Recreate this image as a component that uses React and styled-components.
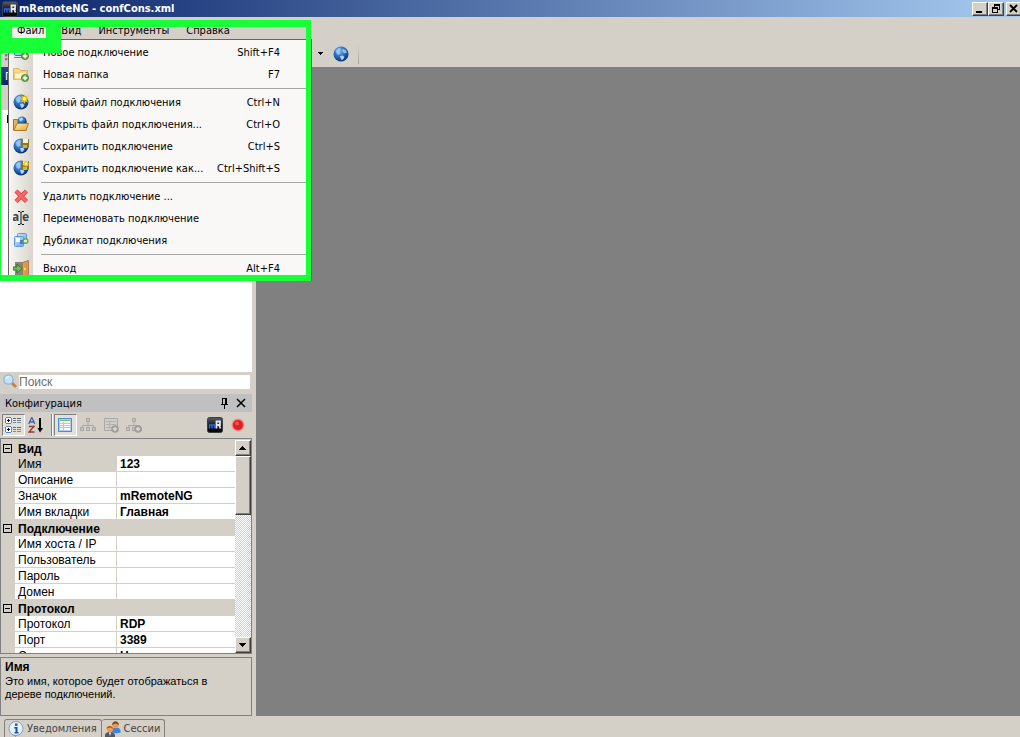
import React, { useState } from 'react'
import styled, { createGlobalStyle, css } from 'styled-components'

const properties = [
  { category: 'Вид' },
  { name: 'Имя', value: '123' },
  { name: 'Описание', value: '' },
  { name: 'Значок', value: 'mRemoteNG' },
  { name: 'Имя вкладки', value: 'Главная' },
  { category: 'Подключение' },
  { name: 'Имя хоста / IP', value: '' },
  { name: 'Пользователь', value: '' },
  { name: 'Пароль', value: '' },
  { name: 'Домен', value: '' },
  { category: 'Протокол' },
  { name: 'Протокол', value: 'RDP' },
  { name: 'Порт', value: '3389' },
  { name: 'Сессия консоли', value: 'Нет' },
]

const fileMenu = [
  { icon: NewConnectionIcon, label: 'Новое подключение', keys: 'Shift+F4' },
  { icon: NewFolderIcon, label: 'Новая папка', keys: 'F7' },
  null,
  { icon: NewFileIcon, label: 'Новый файл подключения', keys: 'Ctrl+N' },
  { icon: OpenFileIcon, label: 'Открыть файл подключения...', keys: 'Ctrl+O' },
  { icon: SaveIcon, label: 'Сохранить подключение', keys: 'Ctrl+S' },
  { icon: SaveAsIcon, label: 'Сохранить подключение как...', keys: 'Ctrl+Shift+S' },
  null,
  { icon: DeleteIcon, label: 'Удалить подключение ...' },
  { icon: RenameIcon, label: 'Переименовать подключение' },
  { icon: DuplicateIcon, label: 'Дубликат подключения' },
  null,
  { icon: ExitIcon, label: 'Выход', keys: 'Alt+F4' },
]

/* icons */

function Icon({ children, size = 16, crisp }) {
  return (
    <svg
      width={size}
      height={size}
      viewBox={`0 0 ${size} ${size}`}
      shapeRendering={crisp ? 'crispEdges' : 'auto'}
      aria-hidden="true"
    >
      {children}
    </svg>
  )
}

function Gradients() {
  return (
    <svg width="0" height="0" aria-hidden="true">
      <defs>
        <radialGradient id="ball" cx="0.4" cy="0.3" r="0.75">
          <stop offset="0" stopColor="#7db8f0" />
          <stop offset="0.45" stopColor="#2f74c6" />
          <stop offset="1" stopColor="#082765" />
        </radialGradient>
        <radialGradient id="record">
          <stop offset="0.4" stopColor="#e3202a" />
          <stop offset="0.7" stopColor="#e8584f" />
          <stop offset="1" stopColor="#ff9a90" stopOpacity="0.2" />
        </radialGradient>
        <linearGradient id="black" x1="0" y1="0" x2="0" y2="1">
          <stop offset="0" stopColor="#5b5f66" />
          <stop offset="0.5" stopColor="#16181c" />
          <stop offset="1" stopColor="#000" />
        </linearGradient>
        <linearGradient id="folder" x1="0" y1="0" x2="1" y2="1">
          <stop offset="0" stopColor="#fff0b0" />
          <stop offset="1" stopColor="#e3a53c" />
        </linearGradient>
        <linearGradient id="screen" x1="0" y1="0" x2="1" y2="1">
          <stop offset="0" stopColor="#cfe6fb" />
          <stop offset="1" stopColor="#6aa5e6" />
        </linearGradient>
      </defs>
    </svg>
  )
}

function Ball() {
  return (
    <g>
      <circle cx="8" cy="8" r="7.5" fill="url(#ball)" />
      <path d="M2.5 4.5L6 1.8 8 3 6.5 5.5 7.5 7.5 5 9 3.5 7.2z" fill="#a9d4f5" opacity="0.7" />
      <path d="M9.5 3l3 .7 1.6 3-2.6.6-2-1.6z" fill="#b5daf7" opacity="0.7" />
      <path d="M7 10l3-.6 1.4 2L9.5 14 8 13.4z" fill="#c9e6fb" opacity="0.85" />
    </g>
  )
}

function Plus() {
  return (
    <g>
      <circle cx="12" cy="12" r="3.6" fill="#6aa84f" stroke="#47812f" strokeWidth="0.8" />
      <path d="M12 9.8v4.4M9.8 12h4.4" stroke="#fff" strokeWidth="1.4" />
    </g>
  )
}

function Star() {
  return (
    <g>
      <path d="M11.5 0l1.1 2.4L15 1.3l-1 2.4L16 5l-2 1 1 2.5-2.5-1-1 2.5-1-2.5-2.5 1 1-2.5-2-1 2-1.3-1-2.4 2.5 1.1z" fill="#e8bd1c" />
      <circle cx="11.5" cy="4.8" r="1.8" fill="#fff29a" />
    </g>
  )
}

function Floppy() {
  return (
    <g>
      <path d="M8 1h8v8l-1 1H8z" fill="#8b7426" />
      <path d="M10 1h5v4h-5z" fill="#f6f2e2" />
      <path d="M10 7h4v3h-4z" fill="#c9b45c" />
    </g>
  )
}

function GlobeIcon() {
  return <Icon><Ball /></Icon>
}

function NewConnectionIcon() {
  return (
    <Icon>
      <rect x="1.5" y="2.5" width="12" height="9" rx="1" fill="url(#screen)" stroke="#3c76c2" />
      <path d="M1 13.5h10" stroke="#4c86cc" />
      <path d="M3 5h7" stroke="#fff" />
      <Plus />
    </Icon>
  )
}

function NewFolderIcon() {
  return (
    <Icon>
      <path d="M.5 13.5v-11h5.500l1.500 2h7v9z" fill="#f4d98a" stroke="#d9b25c" />
      <path d="M1.500 13V7h5l1-1h6v7z" fill="#fdf3c4" stroke="#e6c878" />
      <Plus />
    </Icon>
  )
}

function NewFileIcon() {
  return <Icon><Ball /><Star /></Icon>
}

function OpenFileIcon() {
  return (
    <Icon>
      <path d="M.5 14V3.5h4l1 1.500h8v9z" fill="#e6b24d" stroke="#a8741c" />
      <circle cx="9" cy="5" r="4.5" fill="url(#ball)" />
      <path d="M6 3l3-1.500 1 2-3 2z" fill="#b5daf7" />
      <path d="M.8 14.500L4 7.500h11.500L13 14.500z" fill="url(#folder)" stroke="#b27a1e" />
    </Icon>
  )
}

function SaveIcon() {
  return <Icon><Ball /><Floppy /></Icon>
}

function SaveAsIcon() {
  return (
    <Icon>
      <Ball />
      <Floppy />
      <g transform="translate(4 0) scale(0.78)"><Star /></g>
    </Icon>
  )
}

function DeleteIcon() {
  return (
    <Icon>
      <path d="M3 3l10.500 10.500M13.500 3L3 13.500" stroke="#d8404a" strokeWidth="4.4" />
      <path d="M3 3l10.500 10.500M13.500 3L3 13.500" stroke="#ff6464" strokeWidth="2.8" />
    </Icon>
  )
}

function RenameIcon() {
  return (
    <Icon>
      <text x="-1" y="11" fontFamily="'Noto Sans', sans-serif" fontSize="12" fontWeight="700" fill="#444">a</text>
      <text x="9" y="11" fontFamily="'Noto Sans', sans-serif" fontSize="12" fontWeight="700" fill="#444">e</text>
      <path d="M5 1.500h2l1 1 1-1h2M5 14.500h2l1-1 1 1h2M8 2v12" stroke="#111" fill="none" />
    </Icon>
  )
}

function DuplicateIcon() {
  return (
    <Icon>
      <rect x="4.5" y="1.5" width="9" height="10" rx="1" fill="url(#screen)" stroke="#5d96dc" />
      <rect x="1.5" y="4.500" width="9" height="10" rx="1" fill="url(#screen)" stroke="#5d96dc" />
      <path d="M3 6h4v4H3z" fill="#f2f9ff" />
      <path d="M7 8h4v4H7z" fill="#3f7fd0" />
      <circle cx="12.500" cy="9" r="2.300" fill="#e6f2dc" stroke="#6aa84f" strokeWidth="1.4" />
    </Icon>
  )
}

function ExitIcon() {
  return (
    <Icon>
      <path d="M2 2h8v14H2z" fill="#85857f" />
      <path d="M9.500 2.500L15.500.5v15.500h-6z" fill="#d9a066" stroke="#b07840" />
      <path d="M13 3v12" stroke="#c08850" />
      <circle cx="12" cy="9" r="1.2" fill="#f8d84a" />
      <path d="M0 7h4V4l5 4.500L4 13v-3H0z" fill="#6fbf58" stroke="#2e7a24" />
    </Icon>
  )
}

function AppIcon() {
  return (
    <Icon>
      <rect x="0.5" y="0.5" width="15" height="15" rx="2" fill="url(#black)" stroke="#3a3d42" />
      <path d="M2.500 11.500V8h5v3.500M5 8v3.500" stroke="#2f62e8" strokeWidth="1.5" fill="none" />
      <path d="M9.500 11.500V4.500H13v3.500H9.500M12 8l1.500 3.500" stroke="#e4e8ee" strokeWidth="1.8" fill="none" />
    </Icon>
  )
}

function SearchIcon() {
  return (
    <Icon>
      <path d="M9 9l4 4" stroke="#c0883c" strokeWidth="3" />
      <circle cx="5.500" cy="5.500" r="4.600" fill="#c8e2fa" stroke="#8fb6dd" strokeWidth="1.4" />
      <path d="M3 4.500a3 3 0 0 1 3-2" stroke="#fff" fill="none" />
    </Icon>
  )
}

function CategorizedIcon() {
  return (
    <Icon crisp>
      {[0, 9].map((y) => (
        <g key={y}>
          <path d={`M1 ${y}h5v1h1v5h-1v1h-5v-1h-1v-5h1z`} fill="#4f87c7" />
          <path d={`M1 ${y + 1}h5v5h-5z`} fill="#fff" />
          <path d={`M2 ${y + 3}h3v1h-3zM3 ${y + 2}h1v3h-1z`} fill="#000" />
          <path d={`M8 ${y + 1}h3v1h-3zM12 ${y + 1}h4v1h-4z`} fill="#6b6b66" />
          <path d={`M8 ${y + 3}h3v1h-3zM12 ${y + 3}h4v1h-4z`} fill="#5a8ac2" />
          <path d={`M8 ${y + 5}h3v1h-3zM12 ${y + 5}h4v1h-4z`} fill="#8a8f86" />
        </g>
      ))}
    </Icon>
  )
}

function SortIcon() {
  return (
    <Icon>
      <path d="M.8 7L3.500.8h.6L6.800 7M2 5h4" stroke="#3a63b0" strokeWidth="1.3" fill="none" />
      <path d="M1 9.500h5L1 15h5.500" stroke="#9c3636" strokeWidth="1.3" fill="none" />
      <path d="M12 1v12" stroke="#000" strokeWidth="2" />
      <path d="M9.500 11H15l-3 4.500z" fill="#000" />
    </Icon>
  )
}

function PropertiesIcon() {
  return (
    <Icon crisp>
      <path d="M1 1h14v14H1z" fill="#4f8fd8" />
      <path d="M2 2h12v12H2z" fill="#a9ccf2" />
      <path d="M3 3h10v1H3z" fill="#7fc06c" />
      <path d="M3 4h10v9H3z" fill="#fff" />
      <path d="M3 6h10v1H3zM3 8h10v1H3zM3 10h10v1H3zM6 5h1v8H6z" fill="#a9c8ea" />
    </Icon>
  )
}

function InheritanceIcon({ plus }) {
  return (
    <Icon>
      <path d="M8 5v4M2.500 11V8.500h11V11" stroke="#aaa8a2" fill="none" />
      <path d="M6 1h4v4H6zM0 10h4v4H0zM6 10h4v4H6zM12 10h4v4h-4z" fill="#aaa8a2" />
      <path d="M7 2h2v2H7zM1 11h2v2H1zM7 11h2v2H7zM13 11h2v2h-2z" fill="#c4c2bc" />
      {plus && <DisabledPlus />}
    </Icon>
  )
}

function DisabledPlus() {
  return (
    <g>
      <circle cx="12" cy="12" r="3.8" fill="#a09e98" />
      <path d="M12 10v4M10 12h4" stroke="#dedbd4" strokeWidth="1.4" />
    </g>
  )
}

function DefaultPropertiesIcon() {
  return (
    <Icon>
      <path d="M1.500 1.500h13v12h-13z" fill="#d0cdc6" stroke="#aaa8a2" />
      <path d="M3 4.500h10M3 7.500h10M3 10.500h10M6.500 4v8" stroke="#b4b2ac" />
      <DisabledPlus />
    </Icon>
  )
}

function RecordIcon() {
  return (
    <Icon>
      <circle cx="8" cy="8" r="7" fill="url(#record)" />
      <circle cx="8" cy="8" r="4.800" fill="#dd1f26" />
      <circle cx="7" cy="6.500" r="2" fill="#ef5355" />
    </Icon>
  )
}

function InfoIcon() {
  return (
    <Icon>
      <path d="M4 13l4 3v-3z" fill="#5f7fae" />
      <circle cx="8" cy="7.500" r="7" fill="#e6f0fc" stroke="#7f9cc4" />
      <path d="M7 2.500h2.500v2.200H7zM6.300 6H9.500v5h1v1.500h-4V11h1V7.500H6.300z" fill="#1c4fa8" />
    </Icon>
  )
}

function SessionsIcon() {
  return (
    <Icon>
      <path d="M7 9.500c0-4 8-4 8.500 0v2c-2 1-6 1-8.500 0z" fill="#3c86e0" />
      <circle cx="10.500" cy="4" r="3.300" fill="#e89a5c" />
      <path d="M7 4C7.500-1 13.500-1 14 4l-3.500-1.500z" fill="#8a4d1c" />
      <path d="M0 14c0-4 9.500-4 10 0v2H0z" fill="#55585e" />
      <path d="M4 11.500h2L5 15z" fill="#fff" />
      <circle cx="4.800" cy="8" r="3.200" fill="#f29a52" />
      <path d="M1.500 7.500C2 4 7.500 4 8 7.500L5 6.500z" fill="#b3561a" />
    </Icon>
  )
}

/* application */

export default function App() {
  const [query, setQuery] = useState('')

  return (
    <Window>
      <GlobalStyle />
      <Gradients />
      <TitleBar>
        <AppIcon />
        <h1>mRemoteNG - confCons.xml</h1>
        <CaptionButton aria-label="Свернуть">
          <Icon size={12} crisp><path d="M2 8h6v2H2z" /></Icon>
        </CaptionButton>
        <CaptionButton aria-label="Восстановить">
          <Icon size={12} crisp>
            <path d="M4 1h6v6H8V6h1V3H5v1H4zM2 4h6v6H2zM3 6v3h4V6z" fillRule="evenodd" />
          </Icon>
        </CaptionButton>
        <CaptionButton $last aria-label="Закрыть">
          <Icon size={12}><path d="M2 2l7 7M9 2L2 9" stroke="#000" strokeWidth="1.8" /></Icon>
        </CaptionButton>
      </TitleBar>

      <MenuBar>
        <MenuTitle $open>Файл</MenuTitle>
        <MenuTitle>Вид</MenuTitle>
        <MenuTitle>Инструменты</MenuTitle>
        <MenuTitle>Справка</MenuTitle>
        <FileMenu />
      </MenuBar>

      <ToolStrip>
        <Grip />
        <ToolButton aria-label="Список">
          <Icon size={6} crisp><path d="M0 1h5v1H4v1H3v1H2V3H1V2H0z" /></Icon>
        </ToolButton>
        <ToolButton aria-label="Быстрое подключение"><GlobeIcon /></ToolButton>
      </ToolStrip>

      <Workspace>
        <SidePanel>
          <PanelCaption $active>П</PanelCaption>
          <TreeTools />
          <Tree />
          <SearchRow>
            <label htmlFor="search" aria-label="Поиск"><SearchIcon /></label>
            <input
              id="search"
              placeholder="Поиск"
              value={query}
              onChange={(e) => setQuery(e.target.value)}
            />
          </SearchRow>
          <PanelCaption>
            <span>Конфигурация</span>
            <PanelButton aria-label="Закрепить">
              <Icon size={11} crisp>
                <path d="M3 0h5v6h1v1H6v4H5V7H2V6h1zM4 1v5h2V1z" fillRule="evenodd" />
              </Icon>
            </PanelButton>
            <PanelButton aria-label="Закрыть панель">
              <Icon size={11}><path d="M1 1l8 8M9 1L1 9" stroke="#000" strokeWidth="1.5" /></Icon>
            </PanelButton>
          </PanelCaption>
          <PropertyTools />
          <PropertyGrid />
          <Description>
            <b>Имя</b>
            <p>Это имя, которое будет отображаться в дереве подключений.</p>
          </Description>
        </SidePanel>
        <Documents />
      </Workspace>

      <BottomTabs>
        <BottomTab><InfoIcon />Уведомления</BottomTab>
        <BottomTab><SessionsIcon />Сессии</BottomTab>
      </BottomTabs>

      <MenuOutline />
      <TitleOutline />
    </Window>
  )
}

function FileMenu() {
  return (
    <Dropdown>
      {fileMenu.map((item, index) => {
        if (!item) return <Separator key={index} />
        return (
          <MenuItem key={index}>
            <item.icon />
            <span>{item.label}</span>
            <kbd>{item.keys}</kbd>
          </MenuItem>
        )
      })}
    </Dropdown>
  )
}

function PropertyTools() {
  return (
    <PropertyBar>
      <PropertyButton $pressed aria-label="По категориям"><CategorizedIcon /></PropertyButton>
      <PropertyButton aria-label="По алфавиту"><SortIcon /></PropertyButton>
      <Divider />
      <PropertyButton $pressed aria-label="Свойства"><PropertiesIcon /></PropertyButton>
      <PropertyButton aria-label="Наследование"><InheritanceIcon /></PropertyButton>
      <PropertyButton aria-label="Свойства по умолчанию"><DefaultPropertiesIcon /></PropertyButton>
      <PropertyButton aria-label="Наследование по умолчанию"><InheritanceIcon plus /></PropertyButton>
      <Spacer />
      <PropertyButton aria-label="Значок"><AppIcon /></PropertyButton>
      <PropertyButton aria-label="Состояние"><RecordIcon /></PropertyButton>
    </PropertyBar>
  )
}

function PropertyGrid() {
  return (
    <GridBox>
      <GridView>
        <Table>
          <colgroup>
            <col style={{ width: 14 }} />
            <col style={{ width: 102 }} />
            <col />
          </colgroup>
          <tbody>
            {properties.map((item, index) =>
              item.category ? (
                <CategoryRow key={index}>
                  <td>
                    <button aria-label={item.category}>
                      <Icon size={9} crisp>
                        <path d="M0 0h9v9H0zM1 1v7h7V1zM2 4h5v1H2z" fillRule="evenodd" />
                      </Icon>
                    </button>
                  </td>
                  <th colSpan={2}>{item.category}</th>
                </CategoryRow>
              ) : (
                <PropertyRow key={index} $selected={index === 1}>
                  <td />
                  <th>{item.name}</th>
                  <td>{item.value}</td>
                </PropertyRow>
              )
            )}
          </tbody>
        </Table>
      </GridView>
      <ScrollBar>
        <ScrollButton aria-label="Вверх">
          <Icon size={8} crisp><path d="M3 2h1v1h1v1h1v1h1v1H0V5h1V4h1V3h1z" /></Icon>
        </ScrollButton>
        <Thumb />
        <Spacer />
        <ScrollButton aria-label="Вниз">
          <Icon size={8} crisp><path d="M0 2h7v1H6v1H5v1H4v1H3V5H2V4H1V3H0z" /></Icon>
        </ScrollButton>
      </ScrollBar>
    </GridBox>
  )
}

const GlobalStyle = createGlobalStyle`
  * {
    box-sizing: border-box;
  }

  body {
    margin: 0;
    background: #d4d0c8;
    overflow: hidden;
  }

  body, button, input {
    font-family: "DejaVu Sans Condensed", "DejaVu Sans", sans-serif;
    font-size: 11px;
    color: #000;
  }

  button {
    margin: 0;
    padding: 0;
    border: 0;
    background: none;
  }

  svg {
    flex: none;
    display: block;
  }
`

const raised = css`
  background: #d4d0c8;
  border: 1px solid;
  border-color: #fff #404040 #404040 #fff;
  box-shadow: inset -1px -1px #808080;
`

const Window = styled.div`
  position: relative;
  display: flex;
  flex-direction: column;
  height: 100vh;
  background: #d4d0c8;
`

const TitleBar = styled.header`
  display: flex;
  align-items: center;
  height: 17px;
  flex: none;
  padding-left: 2px;
  background: linear-gradient(90deg, #0a246a, #a6caf0);

  h1 {
    flex: 1;
    margin: 0 0 0 1px;
    color: #fff;
    font-size: 11px;
    line-height: 16px;
  }
`

const CaptionButton = styled.button`
  ${raised}
  width: 16px;
  height: 14px;
  margin-left: ${({ $last }) => ($last ? '2px' : '0')};
  margin-right: ${({ $last }) => ($last ? '-2px' : '0')};
  padding-left: 1px;
`

const MenuBar = styled.nav`
  position: relative;
  display: flex;
  flex: none;
  height: 23px;
  padding: 3px 0 0 12px;
`

const MenuTitle = styled.button`
  height: 20px;
  padding: 0 5px;
  margin-right: 7px;
  background: ${({ $open }) => ($open ? '#f1efec' : 'transparent')};
`

const Dropdown = styled.div`
  position: absolute;
  z-index: 1;
  top: 22px;
  left: 8px;
  width: 304px;
  padding: 1px 0;
  border: 1px solid #666;
  background: linear-gradient(90deg, #f7f6f3, #d9d5cd 24px, #f9f8f7 24px);
`

const MenuItem = styled.button`
  display: flex;
  align-items: center;
  width: 100%;
  height: 22px;
  padding: 0 31px 0 4px;
  text-align: left;

  span {
    flex: 1;
    margin-left: 14px;
    white-space: nowrap;
  }

  kbd {
    font-family: inherit;
  }
`

const Separator = styled.hr`
  height: 1px;
  margin: 3px 0 2px 32px;
  border: 0;
  background: #a6a6a6;
`

const ToolStrip = styled.div`
  display: flex;
  align-items: center;
  flex: none;
  width: 359px;
  height: 27px;
  padding-left: 5px;
  gap: 9px;
  background: linear-gradient(transparent, #a6a29a) right / 1px 20px no-repeat;
`

const Grip = styled.i`
  flex: none;
  width: 304px;
  height: 16px;
  background: radial-gradient(circle at 1px 1px, #808080 1px, transparent 2px) 0 0 / 3px 4px repeat-y;
`

const ToolButton = styled.button`
  display: flex;
`

const Workspace = styled.main`
  display: flex;
  flex: 1;
  min-height: 0;
`

const SidePanel = styled.aside`
  display: flex;
  flex-direction: column;
  flex: 0 0 252px;
  min-width: 0;
`

const Documents = styled.section`
  flex: 1;
  margin-left: 4px;
  background: #808080;
`

const PanelCaption = styled.div`
  display: flex;
  align-items: center;
  flex: none;
  height: 18px;
  padding: 1px 5px 0;
  gap: 6px;
  color: ${({ $active }) => ($active ? '#fff' : '#000')};
  background: ${({ $active }) => ($active ? 'linear-gradient(#29468f, #0a246a)' : '#c0c0c0')};

  span {
    flex: 1;
  }
`

const PanelButton = styled.button`
  display: flex;
`

const TreeTools = styled.div`
  flex: none;
  height: 25px;
`

const Tree = styled.div`
  flex: 1;
  padding: 5px 7px;
  background: #fff;

  &::before {
    content: "";
    display: block;
    width: 1px;
    height: 8px;
    background: #000;
  }
`

const SearchRow = styled.div`
  display: flex;
  align-items: center;
  flex: none;
  height: 22px;
  padding: 0 2px 3px 3px;

  input {
    flex: 1;
    min-width: 0;
    height: 14px;
    padding: 0;
    border: 0;
    font-family: "Liberation Sans", sans-serif;
    font-size: 12px;
    background: #fff;

    &::placeholder {
      color: #6d6d6d;
      opacity: 1;
    }
  }
`

const PropertyBar = styled.div`
  display: flex;
  align-items: center;
  flex: none;
  height: 26px;
  padding: 0 2px;
`

const PropertyButton = styled.button`
  display: flex;
  align-items: center;
  width: 23px;
  height: 22px;
  padding-left: 2px;
  border: 1px solid;
  border-color: ${({ $pressed }) => ($pressed ? '#808080 #fff #fff #808080' : 'transparent')};
  background: ${({ $pressed }) => ($pressed ? '#e3e0da' : 'transparent')};
`

const Divider = styled.i`
  width: 2px;
  height: 22px;
  margin: 0 1px 0 3px;
  border-left: 1px solid #808080;
  border-right: 1px solid #fff;
`

const Spacer = styled.i`
  flex: 1;
`

const GridBox = styled.div`
  display: flex;
  flex: none;
  height: 216px;
  border: 1px solid #808080;
  padding-top: 1px;
  overflow: hidden;
`

const GridView = styled.div`
  flex: 1;
  overflow: hidden;
`

const Table = styled.table`
  width: 100%;
  table-layout: fixed;
  border-collapse: separate;
  border-spacing: 0;
  font-family: "Liberation Sans", sans-serif;
  font-size: 12px;
  line-height: 14px;

  td, th {
    height: 16px;
    padding: 1px 0 0 3px;
    text-align: left;
    white-space: nowrap;
  }
`

const CategoryRow = styled.tr`
  td {
    padding: 0 0 0 2px;
  }

  th {
    font-weight: 700;
  }

  button {
    display: flex;
  }
`

const PropertyRow = styled.tr`
  th {
    font-weight: 400;
    border-right: 1px solid #d4d0c8;
    border-bottom: 1px solid #d4d0c8;
    background: ${({ $selected }) => ($selected ? '#d4d0c8' : '#fff')};
  }

  th + td {
    font-weight: 700;
    border-bottom: 1px solid #d4d0c8;
    background: #fff;
  }
`

const ScrollBar = styled.div`
  display: flex;
  flex-direction: column;
  width: 16px;
  background: repeating-conic-gradient(#fff 0 25%, #d4d0c8 0 50%) 0 0 / 2px 2px;
`

const ScrollButton = styled.button`
  ${raised}
  display: flex;
  align-items: center;
  justify-content: center;
  height: 16px;
`

const Thumb = styled.div`
  ${raised}
  height: 59px;
`

const Description = styled.div`
  flex: none;
  height: 59px;
  margin-top: 3px;
  padding: 1px 24px 0 4px;
  border: 1px solid #808080;
  font-family: "Liberation Sans", sans-serif;
  font-size: 11px;
  line-height: 13px;

  b {
    display: block;
    line-height: 16px;
    font-size: 12px;
  }

  p {
    margin: 0;
  }
`

const BottomTabs = styled.footer`
  display: flex;
  align-items: flex-end;
  flex: none;
  height: 21px;
  padding-left: 4px;
`

const BottomTab = styled.button`
  display: flex;
  align-items: center;
  height: 18px;
  gap: 3px;
  padding: 0 4px 0 3px;
  border: 1px solid #808080;
  border-bottom: 0;
  border-radius: 3px 3px 0 0;
  color: #444;

  & + & {
    border-left: 0;
  }
`

const MenuOutline = styled.div`
  position: absolute;
  z-index: 2;
  top: 20px;
  left: 0;
  width: 311px;
  height: 261px;
  border: solid #17ff36;
  border-width: 7px 5px 6px 1px;
  pointer-events: none;
`

const TitleOutline = styled.div`
  position: absolute;
  z-index: 2;
  top: 20px;
  left: 0;
  width: 61px;
  height: 33px;
  border: solid #17ff36;
  border-width: 7px 15px 15px 12px;
  pointer-events: none;
`
